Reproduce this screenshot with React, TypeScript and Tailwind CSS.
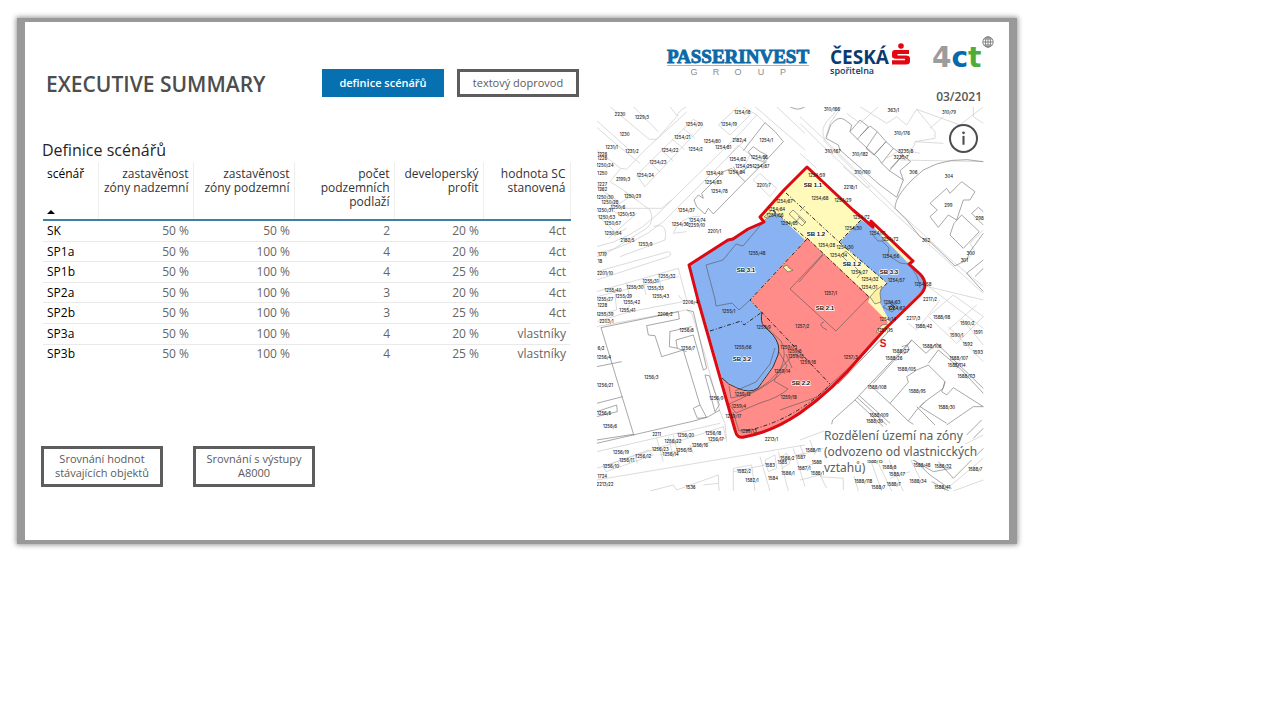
import React from "react";

type Label = [number, number, string];

type Sheet = {
  x: number;
  y: number;
  light: string;
  dark: string;
};

type LabelSheet = { x: number; y: number; labels: Label[] };

/* Parcel lines, one sheet per quadrant, three units to a pixel. */
const sheets: Sheet[] = [
  {
    x: 590,
    y: 100,
    light:
      "M20 62L130 160M20 82L88 140M60 20L178 118H200L262 48L240 20M130 20L205 95M20 150L92 205L60 245M88 140L150 190M92 205L110 208L165 150L290 36M140 225L310 58L340 75L165 260ZM178 186L212 218M214 150L250 183M247 118L283 148M280 85L314 114M262 48Q262 35 290 20M20 440Q120 420 200 345L455 95L500 45L525 68M20 460Q130 440 220 365L470 115M20 255L95 325L215 325L245 300M60 245L100 270L180 330Q195 365 170 385L50 460M50 280L80 300L60 325L95 350M105 275L120 290L75 320M140 340L55 415M20 345L80 400L110 385M20 515L235 455Q250 460 235 470L20 540M20 575L265 505L290 600M110 548L120 598M158 535L168 585M205 522L215 575M20 590L265 530M190 380Q235 365 225 420L90 470M260 380Q290 345 330 350M260 380L250 400L290 395M20 470L40 465L50 475M385 75L450 15L500 45M385 75L420 105L480 45M490 240L510 220L560 265L540 290ZM410 175L445 135L480 165L455 215M495 20L600 110L645 150M560 20L645 100M600 20L640 20",
    dark: "M460 152L525 68Q560 95 580 125L520 190L465 245L425 205L400 215L370 245L335 280L340 295L325 285L312 300L320 320L345 342L355 325L370 342L465 245M475 155L490 140L510 155L530 165L520 185L490 175ZM430 200L445 225L480 195L500 205L530 185M600 20Q625 35 645 20",
  },
  {
    x: 800,
    y: 100,
    light:
      "M0 50L75 120L285 325L465 490L550 560M0 70L60 130L300 355L550 580M0 160L50 205M75 120Q60 90 80 65L120 20M78 110L90 70L125 20M180 20L260 70L290 50L320 75L350 28L480 75L550 20M140 40L180 70L235 20M350 28L405 95V115L345 125M390 85L430 50M345 125Q345 155 300 150L260 175M345 125L430 130M300 180L550 185M520 20V50L550 70M315 175L335 155L360 160M70 120L210 260L200 262L130 200M345 600L300 540L550 600M490 490L525 455L510 430L550 390M0 20H20",
    dark: "M78 115L92 75Q115 45 135 60L155 75L150 95L175 120L235 175L245 190L268 212L310 240L290 292L240 255L120 150L115 135ZM150 95L180 60L205 80L172 118M198 145L232 95L210 78L180 108M198 145L222 165L258 125L232 95M245 190L280 145L258 125L222 165M268 212L310 165L280 145M310 240L300 212L332 185L308 165L272 205M285 325Q285 280 370 210Q450 165 550 185M285 325L320 360L360 410L395 430L465 498L500 480L510 455L550 400M390 310L440 265L450 280L485 245L525 275L510 300L490 300L470 360L445 345L415 382L390 350L412 330ZM485 345L538 395L490 445L450 405L462 370ZM515 340L550 375M515 340L535 322L550 335M500 520L550 480M500 520L550 575M525 530L550 505",
  },
  {
    x: 590,
    y: 295,
    light:
      "M20 95L290 45L305 55L345 180M20 80L120 50L280 20L265 0M345 180L390 350L405 385L410 440M20 470L390 385M20 555L645 450M20 520L400 395L408 430L210 480M200 430L220 500M235 425L250 485M250 420L265 480M300 450L310 475M40 515L175 465L190 480L48 530ZM85 500L90 518M135 480L142 505M180 588L250 570L260 585L385 540L387 588M430 588V520L485 510L495 588M510 485L540 588M430 530L525 510M565 470L595 588M610 460L645 575M525 495L555 480L560 520L535 530ZM570 488L590 475L600 505L575 520M20 60L80 45L75 0M120 30L105 50M340 570L385 565M620 480L645 475",
    dark: "M33 98L132 422M20 445L312 378L355 365L390 345M20 215L95 200M33 98L265 50L268 72L170 92L175 120L195 122L215 185L280 165L330 330L310 340L322 370L350 368L330 330M290 45L310 50L350 220L340 225L310 120L258 135L262 160L290 170M240 110L238 155L262 160M238 110L305 95M345 240L358 242L388 330L375 350L345 240M20 350L80 330L82 350L20 365M20 325L98 305M20 435L130 418",
  },
  {
    x: 800,
    y: 295,
    light:
      "M280 65L380 -30L550 100M325 85L350 105L420 15M390 60L460 0L550 65M385 65L470 145M445 105L530 30M470 145L550 65M445 95L550 200M485 70L550 150M330 0L300 45M0 435L80 405M0 480L70 460M0 520L60 500M0 555L60 540L80 580M60 545L130 550V585M150 500L175 588M210 490L245 588M235 505L275 588M260 480L310 588M320 470L360 550M270 550L330 530M0 450L15 490M30 435L45 480M80 480V530M430 590L550 490M460 588L550 555M450 470L550 420",
    dark: "M95 388L98 375L165 315L335 135L378 175L410 145L550 280M165 315L250 395M172 308L260 390M178 302L270 385M210 270L270 325L325 378L340 388M335 135L320 155L220 265M270 325L325 262L320 245L350 225L385 210L410 235L435 260L430 280L375 320L350 345L325 378M305 155L322 150L328 165L310 178M350 335L405 390M375 320L360 335L440 385M435 260L425 290L440 300L460 278L550 335L520 335L440 390M385 205L415 165L480 220L550 295M470 220L480 205L460 205M500 420L545 375M520 430L550 400M415 500L460 550L550 460M330 490L400 530L455 520M300 455L390 540L440 575L455 580M395 560L450 590",
  },
];

const labelSheets: LabelSheet[] = [
  {
    x: 590,
    y: 100,
    labels: [
      [90, 48, "2230"], [156, 56, "1229/3"], [104, 109, "1230"], [65, 147, "1231/1"], [126, 160, "1231/2"],
      [457, 42, "1254/18"], [417, 77, "1254/19"], [313, 77, "1254/20"], [277, 117, "1254/21"], [240, 155, "1254/22"],
      [317, 152, "1254/2"], [204, 193, "1254/23"], [166, 232, "1254/24"], [99, 244, "2199/3"], [367, 130, "1254/80"],
      [400, 146, "1254/81"], [448, 127, "2182/4"], [529, 125, "1254/1"], [443, 182, "1254/82"], [508, 176, "1254/86"],
      [461, 204, "1254/25"], [513, 204, "1254/87"], [440, 221, "1254/84"], [374, 225, "1254/40"], [370, 252, "1254/83"],
      [388, 280, "1254/78"], [521, 260, "2201/7"], [289, 337, "1254/37"], [322, 366, "1254/74"], [271, 378, "1254/36"],
      [320, 382, "2259/10"], [373, 398, "2201/1"], [128, 295, "1250/29"], [60, 312, "1250/28"], [84, 326, "1250/6"],
      [109, 348, "1250/53"], [50, 357, "1250/53"], [68, 374, "1250/57"], [69, 406, "1250/54"], [112, 427, "2182/5"],
      [166, 438, "1253/9"], [37, 167, "1226"], [37, 181, "1226"], [45, 200, "1250/24"], [37, 226, "1250"], [37, 257, "1227"],
      [37, 274, "1262"], [45, 297, "1250/30"], [45, 336, "1250/31"], [37, 468, "1719"], [30, 489, "18"], [45, 525, "2201/10"],
      [231, 533, "1255/32"], [182, 550, "1255/31"], [135, 567, "1255/30"], [196, 571, "1255/33"], [69, 576, "1255/40"],
      [101, 595, "1255/29"], [212, 594, "1255/43"], [583, 310, "1254/67"], [560, 334, "1254/64"], [555, 351, "1254/66"],
      [598, 376, "1254/65"], [501, 466, "1255/48"],
    ],
  },
  {
    x: 800,
    y: 100,
    labels: [
      [96, 33, "310/166"], [280, 36, "363/1"], [447, 43, "310/79"], [306, 105, "310/176"], [98, 158, "310/167"],
      [180, 169, "310/182"], [317, 160, "3235/8"], [303, 177, "3235/7"], [187, 222, "310/190"], [340, 223, "306"],
      [447, 235, "304"], [151, 267, "2218/1"], [445, 322, "299"], [539, 361, "298"], [378, 426, "302"], [512, 465, "300"],
      [493, 486, "301"], [390, 603, "2217/2"], [50, 232, "1254/59"], [60, 300, "1254/68"], [129, 307, "1254/29"],
      [184, 356, "1254/72"], [160, 391, "1254/30"], [232, 406, "1254/71"], [270, 423, "1254/72"], [80, 440, "1254/28"],
      [135, 447, "1254/30"], [116, 470, "1254/34"], [272, 474, "1254/56"], [178, 521, "1254/27"], [210, 544, "1254/32"],
      [289, 545, "1254/57"], [369, 557, "1254/58"], [208, 567, "1254/31"], [92, 585, "1257/1"],
    ],
  },
  {
    x: 590,
    y: 295,
    labels: [
      [45, 19, "1255/27"], [37, 35, "1228"], [125, 28, "1255/42"], [45, 62, "1255/39"], [112, 52, "1255/41"],
      [301, 28, "2206/4"], [225, 63, "2206/2"], [49, 83, "2203/1"], [290, 110, "1256/8"], [294, 165, "1256/7"],
      [184, 252, "1256/3"], [33, 165, "6/2"], [42, 192, "1256/4"], [45, 275, "1256/21"], [42, 359, "1256/5"],
      [60, 398, "1256/6"], [379, 316, "1256/9"], [200, 423, "2211"], [287, 426, "1256/20"], [370, 421, "1256/18"],
      [249, 444, "1256/22"], [378, 439, "1256/17"], [330, 457, "1256/16"], [211, 468, "1256/23"], [282, 472, "1256/15"],
      [93, 477, "1256/19"], [242, 483, "1256/14"], [160, 489, "1256/12"], [110, 500, "1256/11"], [63, 518, "1256/10"],
      [544, 438, "2213/1"], [37, 549, "1724"], [45, 573, "2213/22"], [302, 583, "1536"], [462, 535, "1582/2"],
      [486, 561, "1582/1"], [540, 515, "1583"], [577, 507, "1585"], [592, 496, "1586/2"], [594, 540, "1586/1"],
      [549, 554, "1584"], [632, 493, "1587"], [416, 54, "1255/1"], [521, 102, "1259/9"],
      [459, 161, "1255/56"], [596, 161, "1259/73"], [614, 173, "1259/5"], [618, 188, "1259/15"], [577, 233, "1259/14"],
      [458, 303, "1259/12"], [596, 312, "1259/18"], [447, 339, "1259/4"], [430, 370, "1259/17"], [476, 415, "1259/13"],
      [637, 98, "1257/2"],
    ],
  },
  {
    x: 800,
    y: 295,
    labels: [
      [340, 76, "2217/3"], [425, 73, "1588/98"], [371, 98, "1588/42"], [502, 91, "1590/2"],
      [470, 126, "1590/1"], [534, 117, "1591"], [503, 154, "1592"], [534, 178, "1593"], [302, 174, "1588/27"],
      [396, 160, "1588/106"], [282, 196, "1588/26"], [476, 195, "1588/107"], [470, 217, "1588/114"], [320, 229, "1588/105"],
      [499, 250, "1588/113"], [231, 281, "1588/108"], [352, 295, "1588/95"], [440, 343, "1588/30"], [237, 366, "1588/109"],
      [224, 384, "1588/30"], [39, 470, "1588/11"], [50, 508, "1588"], [12, 524, "1587/1"],
      [52, 540, "1588/1"], [224, 504, "1588/15"], [268, 521, "1588/8"], [291, 543, "1588/17"], [366, 515, "1588/48"],
      [429, 518, "1588/32"], [526, 528, "1588/7"], [190, 564, "1588/118"], [235, 583, "1588/7"], [281, 572, "1588/7"],
      [354, 565, "1588/34"], [427, 581, "1588/41"], [276, 28, "1254/63"], [290, 46, "1254/67"], [263, 79, "1254/14"],
      [255, 112, "1257/15"], [152, 192, "1257/3"], [24, 206, "1259/16"],
    ],
  },
];

const zoneNames: Label[] = [
  [813, 187, "SB 1.1"],
  [816, 236, "SB 1.2"],
  [852, 266, "SB 1.2"],
  [889, 274, "SB 3.3"],
  [746, 272, "SB 3.1"],
  [825, 310, "SB 2.1"],
  [742, 361, "SB 3.2"],
  [801, 385, "SB 2.2"],
];

const site =
  "M807 167L784 190L760 217L764 222L748 229L733 239L728 240L689 265L698 300L735 430Q737 439 744 437Q772 432 800 413Q834 389 861 356L886 328L920 295Q925 290 925 285Q925 279 920 274L909 264L913 261L871 221L873 227L853 210L838 196Z";

function SiteMap() {
  return (
    <svg viewBox="597 107 387 384" className="block h-auto w-full" role="img" aria-label="Rozdělení území na zóny">
      {sheets.map((s) => (
        <g key={`${s.x}-${s.y}`} transform={`translate(${s.x} ${s.y}) scale(.3333)`} fill="none" strokeLinejoin="round">
          <path d={s.light} stroke="#c8c8c8" strokeWidth="2" />
          <path d={s.dark} stroke="#7c7c7c" strokeWidth="2" />
        </g>
      ))}

      <path d={site} fill="#fff9ba" />
      <path
        d="M689 265L728 240L748 229L764 222L773 210L805 240L750 300L762 312V325L773 335Q780 343 779 352L775 363L758 388Q752 393 746 391Q730 386 722 378Z"
        fill="#88b2f2"
      />
      <path d="M861 220L874 228L909 264L925 280V288L890 322L880 303L878 292L887 283L868 267L840 242Z" fill="#88b2f2" />
      <path
        d="M807 238L870 297L868 302L888 322L861 356Q834 389 800 413Q772 432 742 437L735 430L722 378Q735 390 748 392Q757 391 762 383L775 363Q781 350 777 341Q774 334 762 325V312L750 300Z"
        fill="#ff8c88"
      />
      <g fill="none" stroke="#555" strokeWidth=".6">
        <path d="M770 214L743 246L736 244L723 260L706 265L715 299L716 306L732 303L739 310L750 300" />
        <path d="M775 348L770 364L756 382L735 391" />
        <path d="M823 254L790 289L836 331L869 297M799 282L823 255M824 322q-5 1-2 5l5 3M891 329L838 384" />
        <path d="M764 325L781 341Q788 354 780 370Q760 395 731 398L729 386M779 352L787 366Q777 383 729 404L736 413L760 403Q780 397 788 389L774 381Q781 365 795 354L803 359M786 354L792 368M733 412L739 431L752 429" />
        <path d="M873 235L878 241L882 241L889 248L888 255L900 263L908 264Q919 275 920 288M883 307l8-6 7 6-6 5zM888 307l4-2 3 3" />
        <path d="M789 214l4-4 13 12-4 4zM800 211l5-5M798 216l7 7M841 255l5-4 10 10-4 5zM853 265l8 8-4 5M795 223l5-6" />
        <path d="M780 410L817 397L855 362" />
      </g>
      <g fill="none" stroke="#292929" strokeWidth="1" strokeDasharray="4 2 1 2">
        <path d="M786 193L839 242L861 220M773 210L807 239L750 300L830 384M807 238L870 298M839 242L887 283L880 291" />
        <path d="M710 331L741 321L744 325L762 312M746 431Q795 420 831 384" />
      </g>
      <path
        d="M762 312Q760 322 764 326L773 335Q781 345 778 355L773 367L758 388Q750 394 737 388Q728 385 722 378"
        fill="none"
        stroke="#333"
      />
      <path
        d="M783 267l4-2 2 3 4 2-5 2zM764 217l8-7 3 3-7 5zM870 297l6-7 6-4-2 7 1 9-6 2zM876 332l6-7 5-1 2 3-8 7z"
        fill="#fff1a4"
        stroke="#555"
        strokeWidth=".6"
      />
      <path d="M891 306l3 3h-5zM890 303l5 4" stroke="#222" strokeWidth=".8" fill="#e8e8a0" />
      <path d={site} fill="none" stroke="#dc0a12" strokeWidth="3" strokeLinejoin="round" />

      <g fontFamily="Inter, sans-serif" fontSize="13" fontWeight="500" textAnchor="middle" fill="#222">
        {labelSheets.map((s) => (
          <g key={`${s.x}-${s.y}`} transform={`translate(${s.x} ${s.y}) scale(.3333)`}>
            {s.labels.map(([x, y, text], i) => (
              <text key={i} x={x} y={y}>
                {text}
              </text>
            ))}
          </g>
        ))}
      </g>
      <g
        fontFamily="Liberation Sans, sans-serif"
        fontSize="6"
        fontWeight="700"
        textAnchor="middle"
        fill="#111"
        stroke="#fff"
        strokeWidth="1.4"
        paintOrder="stroke"
      >
        {zoneNames.map(([x, y, text], i) => (
          <text key={i} x={x} y={y}>
            {text}
          </text>
        ))}
      </g>
      <text x="883" y="347" textAnchor="middle" fontFamily="Liberation Sans, sans-serif" fontSize="10" fontWeight="700" fill="#e00f1c">
        S
      </text>
    </svg>
  );
}

function PasserinvestLogo() {
  return (
    <svg width="144" height="32" viewBox="0 0 144 32" className="mt-[9px]" role="img" aria-label="Passerinvest Group">
      <text x="72" y="18" textAnchor="middle" fontFamily="Liberation Serif, serif" fontSize="19" fontWeight="700" fill="#0d69a5" stroke="#0d69a5" strokeWidth=".9">
        PASSERINVEST
      </text>
      <path d="M1 20.500H143" stroke="#a9b4bf" />
      <g fontFamily="Liberation Sans, sans-serif" fontSize="9" fill="#8c8c8c" textAnchor="middle">
        <text x="28" y="30">G</text>
        <text x="50" y="30">R</text>
        <text x="72" y="30">O</text>
        <text x="95" y="30">U</text>
        <text x="117" y="30">P</text>
      </g>
    </svg>
  );
}

function SporitelnaLogo() {
  return (
    <svg width="82" height="34" viewBox="0 0 82 34" className="mt-[7px]" role="img" aria-label="Česká spořitelna">
      <g fontFamily="Open Sans, sans-serif" fill="#0b3a6f">
        <text x="0" y="21" fontSize="19" fontWeight="700">ČESKÁ</text>
        <text x="0" y="31" fontSize="9" fontWeight="600">spořitelna</text>
      </g>
      <circle cx="71" cy="3" r="2.800" fill="#e30613" />
      <path d="M65 7H79V11H67.500V12.500H76Q80 12.500 80 15.500V18.500Q80 21.500 76 21.500H62V17.300H75V15.800H66Q62 15.800 62 13V10Q62 7 65 7Z" fill="#e30613" />
    </svg>
  );
}

function FourCtLogo() {
  return (
    <svg width="64" height="40" viewBox="0 0 64 40" role="img" aria-label="4ct">
      <g fontFamily="DejaVu Sans, sans-serif" fontSize="28" fontWeight="700">
        <text x="0" y="31">
          <tspan fill="#9c9c9c">4</tspan>
          <tspan fill="#0768ac">c</tspan>
          <tspan fill="#4eac3a">t</tspan>
        </text>
      </g>
      <g fill="none" stroke="#777" strokeWidth=".9">
        <circle cx="56" cy="6" r="5.200" />
        <ellipse cx="56" cy="6" rx="2.500" ry="5.200" />
        <path d="M56 1V11M51 6H61M52 3H60M52 9H60" />
      </g>
    </svg>
  );
}

const columns = ["scénář", "zastavěnost zóny nadzemní", "zastavěnost zóny podzemní", "počet podzemních podlaží", "developerský profit", "hodnota SC stanovená"];

const rows = [
  ["SK", "50 %", "50 %", "2", "20 %", "4ct"],
  ["SP1a", "50 %", "100 %", "4", "20 %", "4ct"],
  ["SP1b", "50 %", "100 %", "4", "25 %", "4ct"],
  ["SP2a", "50 %", "100 %", "3", "20 %", "4ct"],
  ["SP2b", "50 %", "100 %", "3", "25 %", "4ct"],
  ["SP3a", "50 %", "100 %", "4", "20 %", "vlastníky"],
  ["SP3b", "50 %", "100 %", "4", "25 %", "vlastníky"],
];

function ScenarioTable() {
  return (
    <table aria-label="Definice scénářů" className="ml-0.5 mt-0.5 h-[202px] w-[527px] table-fixed border-collapse text-xs leading-[14px]">
      <colgroup>
        <col className="w-[55px]" />
        <col className="w-[95px]" />
        <col className="w-[101px]" />
        <col className="w-[100px]" />
        <col className="w-[89px]" />
        <col className="w-[87px]" />
      </colgroup>
      <thead>
        <tr className="h-[58px] border-b-2 border-[#3d7fa5] text-[#333]">
          {columns.map((c, i) => (
            <th
              key={c}
              scope="col"
              aria-sort={i === 0 ? "ascending" : undefined}
              className={`border-r border-[#eeeeee] px-1 pt-[5px] align-top font-normal ${i === 0 ? "text-left text-black" : "text-right"}`}
            >
              {c}
              {i === 0 && (
                <svg width="8" height="4" viewBox="0 0 8 4" className="mt-[29px] block" aria-hidden="true">
                  <path d="M0 4L4 0L8 4Z" fill="#000" />
                </svg>
              )}
            </th>
          ))}
        </tr>
      </thead>
      <tbody>
        {rows.map((r) => (
          <tr key={r[0]} className="border-b border-[#e9e9e9] text-[#666] last:border-0">
            {r.map((v, i) =>
              i === 0 ? (
                <th key={i} scope="row" className="px-1 text-left font-normal text-black">
                  {v}
                </th>
              ) : (
                <td key={i} className="px-1 text-right">
                  {v}
                </td>
              ),
            )}
          </tr>
        ))}
      </tbody>
    </table>
  );
}

const outlineButton = "border-[3px] border-[#5d5d5d] bg-white text-[#5a5a5a]";

export default function App() {
  return (
    <div className="min-h-screen bg-white px-[17px] py-[18px] font-['Open_Sans',sans-serif]">
      <div className="max-w-[1000px] bg-[#999] px-2 py-1 shadow-[0_0_5px_1px_#999]">
        <main className="flex justify-between gap-[18px] bg-white pb-[49px] pl-4 pr-[25px] pt-[14px]">
          <section className="flex w-[538px] shrink-0 flex-col">
            <header className="flex items-center pt-[33px]">
              <h1 className="ml-[5px] w-[276px] whitespace-nowrap pt-0.5 text-[21px] font-semibold leading-[26px] text-[#4d4d4d]">
                EXECUTIVE SUMMARY
              </h1>
              <nav className="flex gap-[13px] text-[11px]" aria-label="Zobrazení">
                <button type="button" className="h-7 w-[122px] bg-[#0670b0] font-semibold text-white">
                  definice scénářů
                </button>
                <button type="button" className={`h-7 w-[122px] ${outlineButton}`}>
                  textový doprovod
                </button>
              </nav>
            </header>
            <h2 className="mt-[43px] pl-px text-base leading-5 text-[#252525]">Definice scénářů</h2>
            <ScenarioTable />
            <div className="mt-auto flex gap-[30px] pb-1 text-[11px] leading-[14px]">
              <button type="button" className={`h-[41px] w-[122px] pb-0.5 ${outlineButton}`}>
                Srovnání hodnot
                <br />
                stávajících objektů
              </button>
              <button type="button" className={`h-[41px] w-[122px] pb-0.5 ${outlineButton}`}>
                Srovnání s výstupy
                <br />
                A8000
              </button>
            </div>
          </section>

          <section className="min-w-0 flex-1">
            <div className="flex pl-[69px]">
              <div className="flex w-[332px] shrink-0 items-start gap-5">
                <PasserinvestLogo />
                <SporitelnaLogo />
                <FourCtLogo />
              </div>
            </div>
            <p className="mt-[9px] pr-[2px] text-right text-xs font-semibold leading-[21px] text-[#555]">03/2021</p>
            <div className="relative">
              <SiteMap />
              <button
                type="button"
                aria-label="Informace"
                className="absolute right-[6px] top-[17px] h-[29px] w-[29px] rounded-full border-2 border-[#4d4d4d] bg-white text-[#4d4d4d]"
              >
                <svg viewBox="0 0 24 24" className="h-full w-full" aria-hidden="true">
                  <path d="M12 9.500V18" stroke="currentColor" strokeWidth="2" />
                  <circle cx="12" cy="6.500" r="1.300" fill="currentColor" />
                </svg>
              </button>
              <p className="absolute bottom-[15px] right-px w-[159px] whitespace-nowrap font-['Noto_Sans',sans-serif] text-xs leading-4 text-[#5c5c5c]">
                <span className="block w-fit bg-white">Rozdělení území na zóny</span>
                <span className="block w-fit bg-white">(odvozeno od vlastnicckých</span>
                <span className="block w-fit bg-white">vztahů)</span>
              </p>
            </div>
          </section>
        </main>
      </div>
    </div>
  );
}
